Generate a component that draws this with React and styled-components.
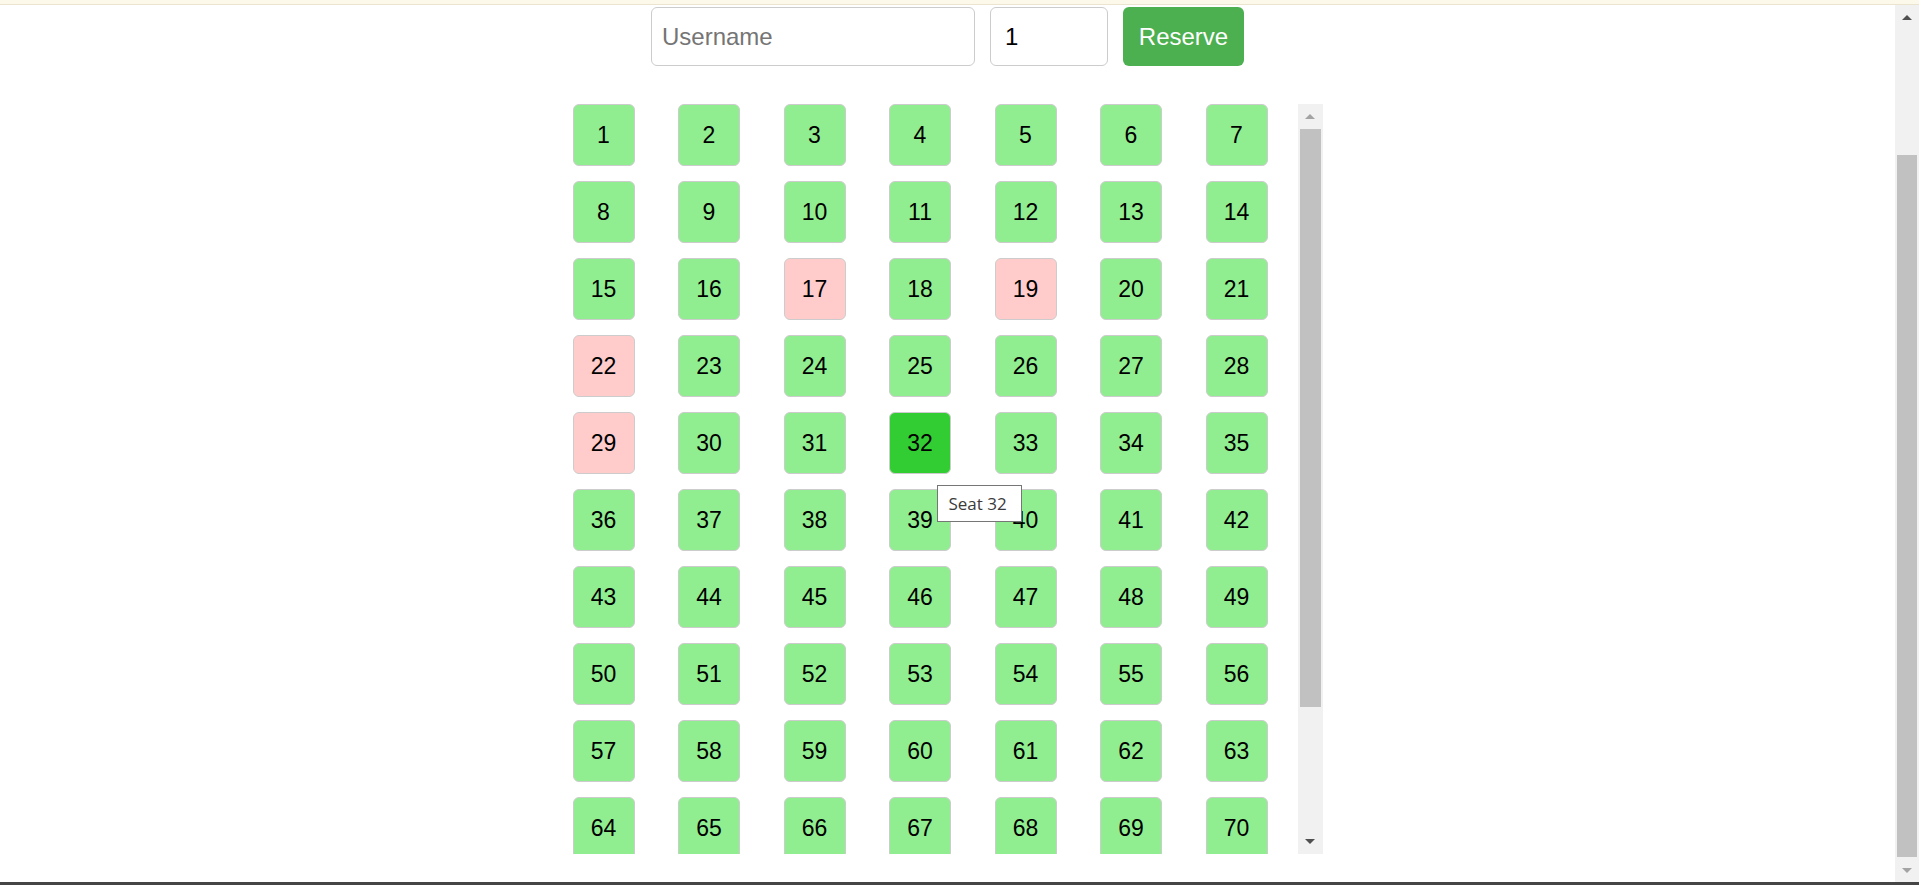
import React, { useState } from 'react';
import styled, { createGlobalStyle } from 'styled-components';

const GlobalStyle = createGlobalStyle`
  html, body {
    overflow: hidden;
  }
  body {
    margin: 0;
    background: #fff;
    font-family: "Liberation Sans", Arial, sans-serif;
  }
  * {
    box-sizing: border-box;
  }
`;

const Page = styled.div`
  display: flex;
  flex-direction: column;
  height: 100vh;
`;

const TopEdge = styled.div`
  height: 5px;
  flex-shrink: 0;
  background: #fcf8ea;
  border-bottom: 1px solid #ebe4cf;
`;

const BottomEdge = styled.div`
  height: 3px;
  flex-shrink: 0;
  background: #454545;
`;

const Viewport = styled.div`
  flex: 1;
  display: flex;
  min-height: 0;
`;

const Main = styled.main`
  flex: 1;
  display: flex;
  flex-direction: column;
  align-items: center;
  padding-top: 2px;
`;

/* scrollbar drawing: rail, arrow buttons and thumb */
const Rail = styled.div`
  width: ${props => props.width}px;
  flex-shrink: 0;
  display: flex;
  flex-direction: column;
  background: #f1f1f1;
`;

const RailButton = styled.div`
  height: ${props => props.size}px;
  flex-shrink: 0;
  display: flex;
  align-items: center;
  justify-content: center;

  &::after {
    content: '';
    width: 0;
    height: 0;
    border-left: 5.5px solid transparent;
    border-right: 5.5px solid transparent;
    ${props => props.dir === 'up'
      ? `border-bottom: 5.5px solid ${props.color};`
      : `border-top: 5.5px solid ${props.color};`}
  }
`;

const RailTrack = styled.div`
  flex: 1;
  display: flex;
  flex-direction: column;
  padding: 0 2px;
`;

const RailThumb = styled.div`
  height: ${props => props.length}px;
  margin-top: ${props => props.offset}px;
  background: #c1c1c1;
`;

const ReserveForm = styled.form`
  display: flex;
  gap: 15px;
  margin-bottom: 38px;
`;

const Field = styled.input`
  height: 59px;
  width: ${props => props.width}px;
  padding: 0 0 0 ${props => props.pad}px;
  border: 1px solid #ccc;
  border-radius: 6px;
  font-family: "Liberation Sans", Arial, sans-serif;
  font-size: 24px;
  color: #000;
  outline: none;

  &::placeholder {
    color: #757575;
  }
`;

const ReserveButton = styled.button`
  height: 59px;
  width: 121px;
  border: none;
  border-radius: 6px;
  background: #4caf50;
  color: #fff;
  font-family: "Liberation Sans", Arial, sans-serif;
  font-size: 24px;
  cursor: pointer;
`;

const SeatPanel = styled.div`
  display: flex;
  width: 750px;
  height: 750px;
`;

const SeatScroller = styled.div`
  flex: 1;
  overflow-y: auto;
  scrollbar-width: none;

  &::-webkit-scrollbar {
    display: none;
  }
`;

const SeatGrid = styled.div`
  position: relative;
  display: grid;
  grid-template-columns: repeat(7, 62px);
  grid-auto-rows: 62px;
  column-gap: 43.5px;
  row-gap: 15px;
`;

const seatColors = {
  free: '#90ee90',
  taken: '#ffcccb',
  picked: '#32cd32',
};

const Seat = styled.button`
  width: 62px;
  height: 62px;
  padding: 0;
  border: 1px solid #ccc;
  border-radius: 6px;
  background: ${props => seatColors[props.status]};
  color: #000;
  font-family: "Liberation Sans", Arial, sans-serif;
  font-size: 23px;
  display: flex;
  align-items: center;
  justify-content: center;
  cursor: ${props => (props.status === 'taken' ? 'not-allowed' : 'pointer')};
`;

const Tooltip = styled.div`
  position: absolute;
  left: 364px;
  top: 381px;
  width: 85px;
  height: 37px;
  padding-left: 11px;
  display: flex;
  align-items: center;
  background: #fff;
  border: 1px solid #767676;
  color: #3b3b3b;
  font-family: "Open Sans", "Noto Sans", sans-serif;
  font-size: 17px;
  pointer-events: none;
  z-index: 2;
`;

const TAKEN = [17, 19, 22, 29];
const TOTAL_SEATS = 84;

const App = () => {
  const [username, setUsername] = useState('');
  const [count, setCount] = useState('1');
  const [picked, setPicked] = useState(32);

  const seats = Array.from({ length: TOTAL_SEATS }, (_, i) => i + 1);

  const statusOf = (n) => {
    if (TAKEN.includes(n)) return 'taken';
    if (n === picked) return 'picked';
    return 'free';
  };

  return (
    <Page>
      <GlobalStyle />
      <TopEdge />
      <Viewport>
        <Main>
          <ReserveForm onSubmit={e => e.preventDefault()}>
            <Field
              width={324}
              pad={10}
              placeholder="Username"
              value={username}
              onChange={e => setUsername(e.target.value)}
            />
            <Field
              width={118}
              pad={14}
              type="text"
              value={count}
              onChange={e => setCount(e.target.value)}
            />
            <ReserveButton type="submit">Reserve</ReserveButton>
          </ReserveForm>
          <SeatPanel>
            <SeatScroller>
              <SeatGrid>
                {seats.map(n => (
                  <Seat
                    key={n}
                    status={statusOf(n)}
                    title={`Seat ${n}`}
                    onClick={() => !TAKEN.includes(n) && setPicked(n)}
                  >
                    {n}
                  </Seat>
                ))}
                <Tooltip>Seat {picked}</Tooltip>
              </SeatGrid>
            </SeatScroller>
            <Rail width={25}>
              <RailButton size={25} dir="up" color="#a3a3a3" />
              <RailTrack>
                <RailThumb length={578} offset={0} />
              </RailTrack>
              <RailButton size={25} dir="down" color="#505050" />
            </Rail>
          </SeatPanel>
        </Main>
        <Rail width={24}>
          <RailButton size={24} dir="up" color="#505050" />
          <RailTrack>
            <RailThumb length={702} offset={126} />
          </RailTrack>
          <RailButton size={24} dir="down" color="#a3a3a3" />
        </Rail>
      </Viewport>
      <BottomEdge />
    </Page>
  );
};

export default App;
